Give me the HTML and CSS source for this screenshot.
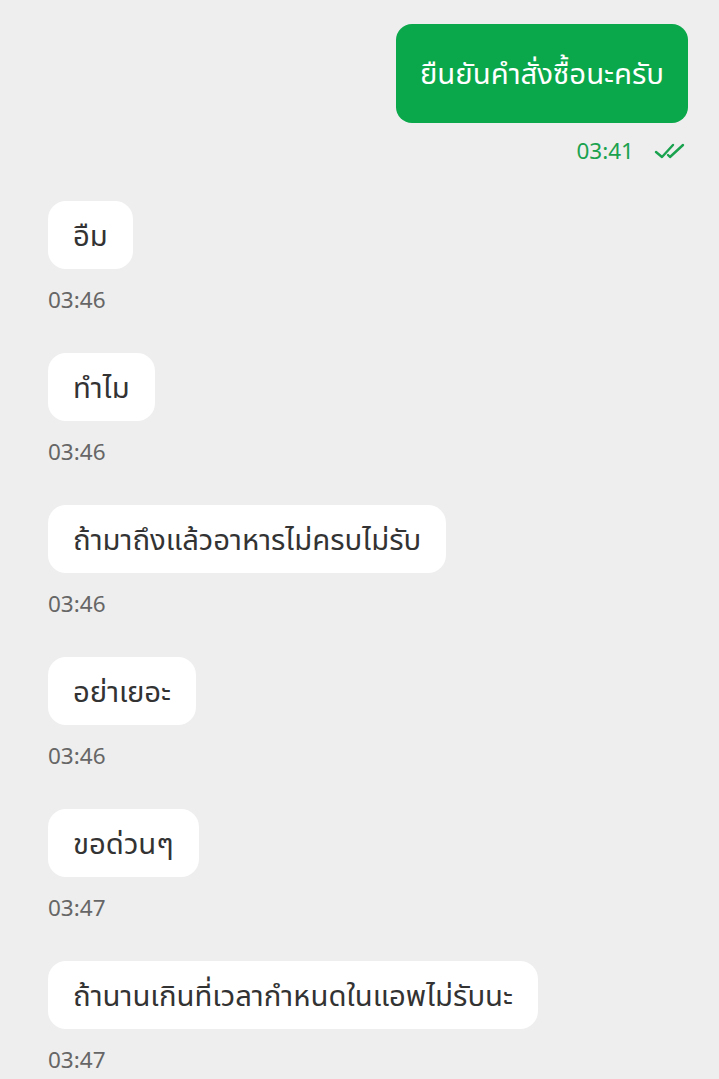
FILE: index.html
```html
<!DOCTYPE html>
<html lang="th">
<head>
<meta charset="utf-8">
<link rel="stylesheet" href="styles.css">
</head>
<body>
<div class="chat">
  <div class="msg out">
    <div class="bubble green">ยืนยันคำสั่งซื้อนะครับ</div>
    <div class="meta">
      <span class="time">03:41</span>
      <svg class="ticks" width="32" height="18" viewBox="0 0 32 18"><path d="M2 10 L8 15 L19 3" fill="none" stroke="#1aa24f" stroke-width="2.4" stroke-linecap="round" stroke-linejoin="round"/><path d="M14 13 L16 15 L29 3" fill="none" stroke="#1aa24f" stroke-width="2.4" stroke-linecap="round" stroke-linejoin="round"/></svg>
    </div>
  </div>
  <div class="msg in"><div class="bubble">อืม</div><div class="time">03:46</div></div>
  <div class="msg in"><div class="bubble">ทำไม</div><div class="time">03:46</div></div>
  <div class="msg in"><div class="bubble">ถ้ามาถึงแล้วอาหารไม่ครบไม่รับ</div><div class="time">03:46</div></div>
  <div class="msg in"><div class="bubble">อย่าเยอะ</div><div class="time">03:46</div></div>
  <div class="msg in"><div class="bubble">ขอด่วนๆ</div><div class="time">03:47</div></div>
  <div class="msg in"><div class="bubble">ถ้านานเกินที่เวลากำหนดในแอพไม่รับนะ</div><div class="time">03:47</div></div>
</div>
</body>
</html>
```
FILE: styles.css
```css
html, body {
  margin: 0;
  padding: 0;
  background: #eeeeee;
}
body {
  font-family: "Noto Sans", "Noto Sans Thai", "Liberation Sans", sans-serif;
  width: 719px;
  height: 1079px;
  overflow: hidden;
}
.chat {
  display: flex;
  flex-direction: column;
  padding: 24px 31px 0 48px;
}
.msg {
  display: flex;
  flex-direction: column;
}
.msg.out {
  align-items: flex-end;
  margin-bottom: 22px;
}
.msg.in {
  align-items: flex-start;
  margin-bottom: 40px;
}
.bubble {
  background: #ffffff;
  color: #333333;
  font-size: 29.3px;
  line-height: 68px;
  height: 68px;
  padding: 0 25px;
  border-radius: 18px;
  white-space: nowrap;
}
.bubble.green {
  background: #0aa84a;
  color: #ffffff;
  height: 99px;
  line-height: 99px;
  padding: 0 24px;
  border-radius: 16px;
}
.meta {
  display: flex;
  align-items: center;
  gap: 20px;
  height: 56px;
  padding-right: 2px;
}
.meta .time {
  color: #1aa24f;
  padding: 0;
  height: auto;
}
.time {
  font-size: 22.5px;
  color: #666666;
  line-height: 26px;
  padding-top: 18px;
  height: 26px;
}
.ticks {
  display: block;
}
```
